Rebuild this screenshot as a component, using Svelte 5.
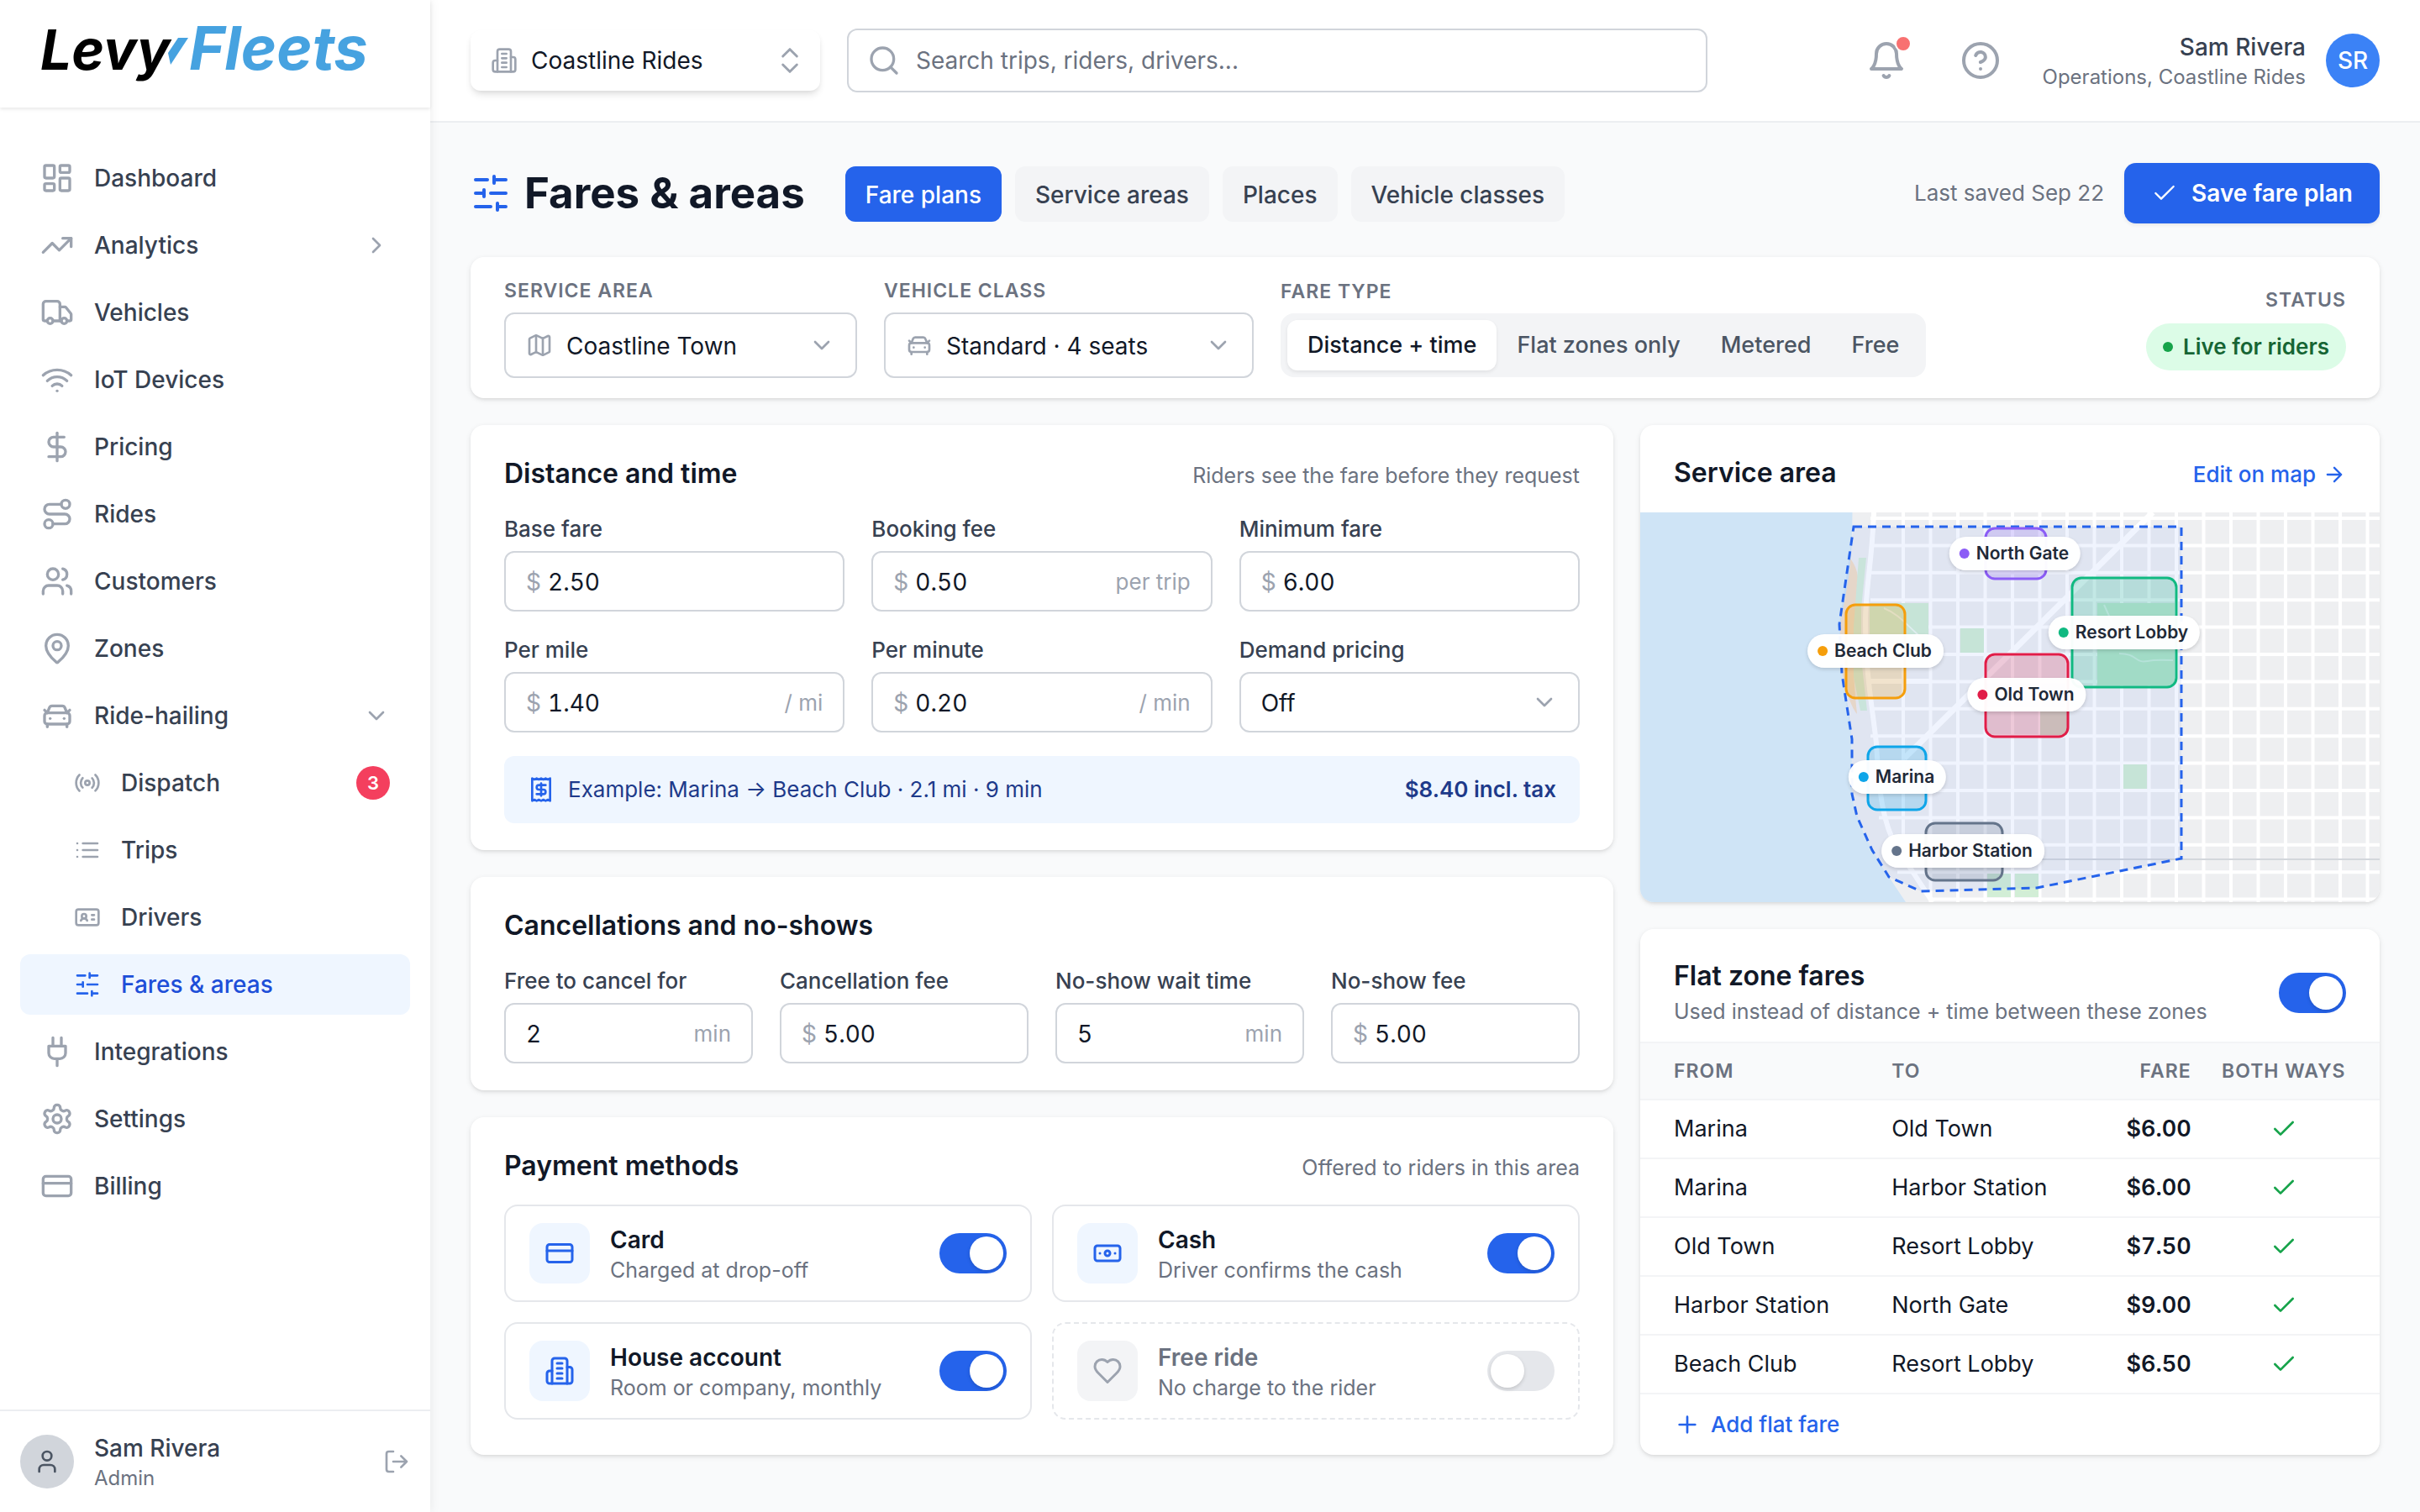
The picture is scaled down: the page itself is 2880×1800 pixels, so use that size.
<script>
  const icons = {
    dashboard:
      '<rect width="7" height="9" x="3" y="3" rx="1"/><rect width="7" height="5" x="14" y="3" rx="1"/><rect width="7" height="9" x="14" y="12" rx="1"/><rect width="7" height="5" x="3" y="16" rx="1"/>',
    trending: '<path d="M22 7 13.5 15.5 8.5 10.5 2 17"/><path d="M16 7h6v6"/>',
    truck:
      '<path d="M14 18V6a2 2 0 0 0-2-2H4a2 2 0 0 0-2 2v11a1 1 0 0 0 1 1h2"/><path d="M15 18H9"/><path d="M19 18h2a1 1 0 0 0 1-1v-3.65a1 1 0 0 0-.22-.624l-3.48-4.35A1 1 0 0 0 17.52 8H14"/><circle cx="17" cy="18" r="2"/><circle cx="7" cy="18" r="2"/>',
    wifi: '<path d="M12 20h.01"/><path d="M2 8.82a15 15 0 0 1 20 0"/><path d="M5 12.859a10 10 0 0 1 14 0"/><path d="M8.5 16.429a5 5 0 0 1 7 0"/>',
    dollar: '<path d="M12 2v20"/><path d="M17 5H9.5a3.5 3.5 0 0 0 0 7h5a3.5 3.5 0 0 1 0 7H6"/>',
    route:
      '<circle cx="6" cy="19" r="3"/><path d="M9 19h8.5a3.5 3.5 0 0 0 0-7h-11a3.5 3.5 0 0 1 0-7H15"/><circle cx="18" cy="5" r="3"/>',
    users:
      '<path d="M16 21v-2a4 4 0 0 0-4-4H6a4 4 0 0 0-4 4v2"/><circle cx="9" cy="7" r="4"/><path d="M22 21v-2a4 4 0 0 0-3-3.87"/><path d="M16 3.13a4 4 0 0 1 0 7.75"/>',
    pin: '<path d="M20 10c0 4.993-5.539 10.193-7.399 11.799a1 1 0 0 1-1.202 0C9.539 20.193 4 14.993 4 10a8 8 0 0 1 16 0"/><circle cx="12" cy="10" r="3"/>',
    car: '<path d="m21 8-2 2-1.5-3.7A2 2 0 0 0 15.646 5H8.4a2 2 0 0 0-1.903 1.257L5 10 3 8"/><path d="M7 14h.01"/><path d="M17 14h.01"/><rect width="18" height="8" x="3" y="10" rx="2"/><path d="M5 18v2"/><path d="M19 18v2"/>',
    radio:
      '<path d="M4.9 19.1C1 15.2 1 8.8 4.9 4.9"/><path d="M7.8 16.2c-2.3-2.3-2.3-6.1 0-8.5"/><circle cx="12" cy="12" r="2"/><path d="M16.2 7.8c2.3 2.3 2.3 6.1 0 8.5"/><path d="M19.1 4.9C23 8.8 23 15.1 19.1 19"/>',
    list: '<path d="M3 12h.01M3 18h.01M3 6h.01M8 12h13M8 18h13M8 6h13"/>',
    idcard:
      '<path d="M16 10h2M16 14h2M6.17 15a3 3 0 0 1 5.66 0"/><circle cx="9" cy="11" r="2"/><rect x="2" y="5" width="20" height="14" rx="2"/>',
    sliders:
      '<path d="M21 4h-7M10 4H3M21 12h-9M8 12H3M21 20h-5M12 20H3M14 2v4M8 10v4M16 18v4"/>',
    plug: '<path d="M12 22v-5M9 8V2M15 8V2M18 8v5a4 4 0 0 1-4 4h-4a4 4 0 0 1-4-4V8Z"/>',
    gear: '<path d="M12.22 2h-.44a2 2 0 0 0-2 2v.18a2 2 0 0 1-1 1.73l-.43.25a2 2 0 0 1-2 0l-.15-.08a2 2 0 0 0-2.73.73l-.22.38a2 2 0 0 0 .73 2.73l.15.1a2 2 0 0 1 1 1.72v.51a2 2 0 0 1-1 1.74l-.15.09a2 2 0 0 0-.73 2.73l.22.38a2 2 0 0 0 2.73.73l.15-.08a2 2 0 0 1 2 0l.43.25a2 2 0 0 1 1 1.73V20a2 2 0 0 0 2 2h.44a2 2 0 0 0 2-2v-.18a2 2 0 0 1 1-1.73l.43-.25a2 2 0 0 1 2 0l.15.08a2 2 0 0 0 2.73-.73l.22-.39a2 2 0 0 0-.73-2.73l-.15-.08a2 2 0 0 1-1-1.74v-.5a2 2 0 0 1 1-1.74l.15-.09a2 2 0 0 0 .73-2.73l-.22-.38a2 2 0 0 0-2.73-.73l-.15.08a2 2 0 0 1-2 0l-.43-.25a2 2 0 0 1-1-1.73V4a2 2 0 0 0-2-2z"/><circle cx="12" cy="12" r="3"/>',
    card: '<rect width="20" height="14" x="2" y="5" rx="2"/><path d="M2 10h20"/>',
    building:
      '<path d="M6 22V4a2 2 0 0 1 2-2h8a2 2 0 0 1 2 2v18Z"/><path d="M6 12H4a2 2 0 0 0-2 2v6a2 2 0 0 0 2 2h2"/><path d="M18 9h2a2 2 0 0 1 2 2v9a2 2 0 0 1-2 2h-2"/><path d="M10 6h4M10 10h4M10 14h4M10 18h4"/>',
    map: '<path d="M14.106 5.553a2 2 0 0 0 1.788 0l3.659-1.83A1 1 0 0 1 21 4.619v12.764a1 1 0 0 1-.553.894l-4.553 2.277a2 2 0 0 1-1.788 0l-4.212-2.106a2 2 0 0 0-1.788 0l-3.659 1.83A1 1 0 0 1 3 19.381V6.618a1 1 0 0 1 .553-.894l4.553-2.277a2 2 0 0 1 1.788 0z"/><path d="M15 5.764v15M9 3.236v15"/>',
    bell: '<path d="M6 8a6 6 0 0 1 12 0c0 7 3 9 3 9H3s3-2 3-9"/><path d="M10.3 21a1.94 1.94 0 0 0 3.4 0"/>',
    help: '<circle cx="12" cy="12" r="10"/><path d="M9.09 9a3 3 0 0 1 5.83 1c0 2-3 3-3 3M12 17h.01"/>',
    search: '<circle cx="11" cy="11" r="8"/><path d="m21 21-4.3-4.3"/>',
    updown: '<path d="m7 15 5 5 5-5M7 9l5-5 5 5"/>',
    right: '<path d="m9 18 6-6-6-6"/>',
    down: '<path d="m6 9 6 6 6-6"/>',
    check: '<path d="M20 6 9 17l-5-5"/>',
    receipt:
      '<path d="M4 2v20l2-1 2 1 2-1 2 1 2-1 2 1 2-1 2 1V2l-2 1-2-1-2 1-2-1-2 1-2-1-2 1Z"/><path d="M16 8h-6a2 2 0 1 0 0 4h4a2 2 0 1 1 0 4H8"/><path d="M12 17.5v-11"/>',
    cash: '<rect width="20" height="12" x="2" y="6" rx="2"/><circle cx="12" cy="12" r="2"/><path d="M6 12h.01M18 12h.01"/>',
    heart:
      '<path d="M19 14c1.49-1.46 3-3.21 3-5.5A5.5 5.5 0 0 0 16.5 3c-1.76 0-3 .5-4.5 2-1.5-1.5-2.74-2-4.5-2A5.5 5.5 0 0 0 2 8.5c0 2.3 1.5 4.05 3 5.5l7 7Z"/>',
    user: '<path d="M19 21v-2a4 4 0 0 0-4-4H9a4 4 0 0 0-4 4v2"/><circle cx="12" cy="7" r="4"/>',
    logout: '<path d="M9 21H5a2 2 0 0 1-2-2V5a2 2 0 0 1 2-2h4M16 17l5-5-5-5M21 12H9"/>',
    arrow: '<path d="M5 12h14M12 5l7 7-7 7"/>',
    plus: '<path d="M5 12h14M12 5v14"/>'
  };

  const nav = [
    { label: 'Dashboard', icon: 'dashboard' },
    { label: 'Analytics', icon: 'trending', chevron: 'right' },
    { label: 'Vehicles', icon: 'truck' },
    { label: 'IoT Devices', icon: 'wifi' },
    { label: 'Pricing', icon: 'dollar' },
    { label: 'Rides', icon: 'route' },
    { label: 'Customers', icon: 'users' },
    { label: 'Zones', icon: 'pin' },
    { label: 'Ride-hailing', icon: 'car', chevron: 'down' },
    { label: 'Dispatch', icon: 'radio', sub: true, badge: 3 },
    { label: 'Trips', icon: 'list', sub: true },
    { label: 'Drivers', icon: 'idcard', sub: true },
    { label: 'Fares & areas', icon: 'sliders', sub: true, active: true },
    { label: 'Integrations', icon: 'plug' },
    { label: 'Settings', icon: 'gear' },
    { label: 'Billing', icon: 'card' }
  ];

  const tabs = ['Fare plans', 'Service areas', 'Places', 'Vehicle classes'];
  let tab = $state('Fare plans');

  const fareTypes = ['Distance + time', 'Flat zones only', 'Metered', 'Free'];
  let fareType = $state('Distance + time');

  const rates = [
    { id: 'base', label: 'Base fare', value: '2.50', money: true },
    { id: 'booking', label: 'Booking fee', value: '0.50', money: true, unit: 'per trip' },
    { id: 'minimum', label: 'Minimum fare', value: '6.00', money: true },
    { id: 'mile', label: 'Per mile', value: '1.40', money: true, unit: '/ mi' },
    { id: 'minute', label: 'Per minute', value: '0.20', money: true, unit: '/ min' }
  ];

  const cancels = [
    { id: 'free-cancel', label: 'Free to cancel for', value: '2', unit: 'min' },
    { id: 'cancel-fee', label: 'Cancellation fee', value: '5.00', money: true },
    { id: 'wait', label: 'No-show wait time', value: '5', unit: 'min' },
    { id: 'noshow-fee', label: 'No-show fee', value: '5.00', money: true }
  ];

  let methods = $state([
    { id: 'card', name: 'Card', note: 'Charged at drop-off', icon: 'card', on: true },
    { id: 'cash', name: 'Cash', note: 'Driver confirms the cash', icon: 'cash', on: true },
    { id: 'house', name: 'House account', note: 'Room or company, monthly', icon: 'building', on: true },
    { id: 'free', name: 'Free ride', note: 'No charge to the rider', icon: 'heart', on: false }
  ]);

  const fares = [
    ['Marina', 'Old Town', '$6.00'],
    ['Marina', 'Harbor Station', '$6.00'],
    ['Old Town', 'Resort Lobby', '$7.50'],
    ['Harbor Station', 'North Gate', '$9.00'],
    ['Beach Club', 'Resort Lobby', '$6.50']
  ];

  // Map drawing space
  const W = 880;
  const H = 464;
  const streetsX = Array.from({ length: 18 }, (_, i) => 313 + i * 32.5);
  const streetsY = Array.from({ length: 15 }, (_, i) => 7 + i * 32.4);
  const parks = [
    [381, 138, 28, 29],
    [575, 300, 28, 29],
    [476, 236, 32, 29],
    [413, 430, 28, 28],
    [446, 430, 28, 28],
    [544, 108, 92, 98],
    [273, 108, 70, 58]
  ];
  const zones = [
    { name: 'North Gate', color: '#8b5cf6', x: 411, y: 19, w: 72, h: 60, lx: 446, ly: 49 },
    { name: 'Resort Lobby', color: '#10b981', x: 514, y: 78, w: 124, h: 130, lx: 576, ly: 143 },
    { name: 'Old Town', color: '#e11d48', x: 411, y: 169, w: 98, h: 98, lx: 460, ly: 217 },
    { name: 'Beach Club', color: '#f59e0b', x: 245, y: 110, w: 70, h: 111, lx: 280, ly: 165 },
    { name: 'Marina', color: '#0ea5e9', x: 271, y: 279, w: 69, h: 75, lx: 306, ly: 315 },
    { name: 'Harbor Station', color: '#64748b', x: 340, y: 370, w: 91, h: 68, lx: 384, ly: 403 }
  ];
</script>

{#snippet icon(name, size)}
  <svg class="ic {size}" viewBox="0 0 24 24" aria-hidden="true">{@html icons[name]}</svg>
{/snippet}

{#snippet field(f)}
  <div class="field">
    <label for={f.id}>{f.label}</label>
    <div class="box">
      {#if f.money}<span class="cur">$</span>{/if}
      <input id={f.id} type="text" value={f.value} />
      {#if f.unit}<span class="unit">{f.unit}</span>{/if}
    </div>
  </div>
{/snippet}

<div class="app">
  <aside>
    <div class="brand">
      <svg class="logo" viewBox="0 0 440 112" role="img" aria-label="Levy Fleets">
        <text class="levy" x="0" y="75">Levy</text>
        <path d="M152 55 164 37h12l-21 32z" fill="#46a2e0" />
        <text class="fleets" x="177" y="75">Fleets</text>
      </svg>
    </div>
    <nav class="menu">
      {#each nav as n}
        <a href="#top" class:sub={n.sub} class:active={n.active}>
          {@render icon(n.icon, n.sub ? 's32' : 's40')}
          <span class="grow">{n.label}</span>
          {#if n.chevron}{@render icon(n.chevron, 's32')}{/if}
          {#if n.badge}<span class="badge">{n.badge}</span>{/if}
        </a>
      {/each}
    </nav>
    <div class="me">
      <span class="face">{@render icon('user', 's32')}</span>
      <div class="who">
        <strong>Sam Rivera</strong>
        <span>Admin</span>
      </div>
      <button class="bare" aria-label="Log out">{@render icon('logout', 's32')}</button>
    </div>
  </aside>

  <div class="main">
    <header>
      <button class="org">
        {@render icon('building', 's32')}
        <span class="grow">Coastline Rides</span>
        {@render icon('updown', 's40 thin')}
      </button>
      <label class="search">
        {@render icon('search', 's40')}
        <input type="text" placeholder="Search trips, riders, drivers..." aria-label="Search" />
      </label>
      <div class="tools">
        <button class="bare bell" aria-label="Notifications">
          {@render icon('bell', 's48')}
          <span class="dot"></span>
        </button>
        <button class="bare" aria-label="Help">{@render icon('help', 's48')}</button>
        <div class="account">
          <div class="who">
            <strong>Sam Rivera</strong>
            <span>Operations, Coastline Rides</span>
          </div>
          <span class="avatar">SR</span>
        </div>
      </div>
    </header>

    <main>
      <div class="titlebar">
        <h1>{@render icon('sliders', 's48')}Fares &amp; areas</h1>
        <div class="tabs">
          {#each tabs as t}
            <button class:on={tab === t} onclick={() => (tab = t)}>{t}</button>
          {/each}
        </div>
        <span class="saved">Last saved Sep 22</span>
        <button class="save">{@render icon('check', 's32 thin')}Save fare plan</button>
      </div>

      <section class="card filters">
        <div class="group area">
          <label class="caps" for="area">Service area</label>
          <div class="pick">
            {@render icon('map', 's32')}
            <select id="area"><option>Coastline Town</option></select>
            {@render icon('down', 's32')}
          </div>
        </div>
        <div class="group klass">
          <label class="caps" for="klass">Vehicle class</label>
          <div class="pick">
            {@render icon('car', 's32')}
            <select id="klass"><option>Standard · 4 seats</option></select>
            {@render icon('down', 's32')}
          </div>
        </div>
        <div class="group">
          <span class="caps" id="ft">Fare type</span>
          <div class="seg" role="group" aria-labelledby="ft">
            {#each fareTypes as t}
              <button class:on={fareType === t} aria-pressed={fareType === t} onclick={() => (fareType = t)}>{t}</button>
            {/each}
          </div>
        </div>
        <div class="group status">
          <span class="caps">Status</span>
          <span class="live">Live for riders</span>
        </div>
      </section>

      <div class="cols">
        <div class="col">
          <section class="card pad">
            <div class="head">
              <h2>Distance and time</h2>
              <span>Riders see the fare before they request</span>
            </div>
            <div class="three">
              {#each rates as f}{@render field(f)}{/each}
              <div class="field">
                <label for="demand">Demand pricing</label>
                <div class="box">
                  <select id="demand"><option>Off</option></select>
                  {@render icon('down', 's32')}
                </div>
              </div>
            </div>
            <div class="example">
              {@render icon('receipt', 's32')}
              <span class="grow">Example: Marina → Beach Club · 2.1 mi · 9 min</span>
              <strong>$8.40 incl. tax</strong>
            </div>
          </section>

          <section class="card pad">
            <div class="head"><h2>Cancellations and no-shows</h2></div>
            <div class="four">
              {#each cancels as f}{@render field(f)}{/each}
            </div>
          </section>

          <section class="card pad fill">
            <div class="head">
              <h2>Payment methods</h2>
              <span>Offered to riders in this area</span>
            </div>
            <div class="two">
              {#each methods as m}
                <label class="method" class:off={!m.on}>
                  <span class="tile">{@render icon(m.icon, 's36')}</span>
                  <span class="grow">
                    <b>{m.name}</b>
                    <small>{m.note}</small>
                  </span>
                  <input class="toggle" type="checkbox" role="switch" bind:checked={m.on} />
                </label>
              {/each}
            </div>
          </section>
        </div>

        <div class="col">
          <section class="card clip">
            <div class="head maphead">
              <h2>Service area</h2>
              <a href="#map">Edit on map {@render icon('arrow', 's28')}</a>
            </div>
            <div class="map">
              <svg viewBox="0 0 {W} {H}" aria-hidden="true">
                <rect width={W} height={H} fill="#eeeff1" />
                <path d="M0 0H252.500C252 60 248 90 241 118C237 140 238 180 242 205C248 235 252 250 252 300V334C256 370 280 410 296 434L316 464H0Z" fill="#cfe4f6" />
                <path d="M250 55C262 70 262 90 256 130C252 170 254 200 258 240C250 230 242 205 239 180C237 150 238 130 241 118C246 90 250 70 250 55Z" fill="#f4dfc6" />
                <path d="M260 54h9l-6 60v60l7 62h-8l-8-40v-60z" fill="#d6eeda" />
                <g fill="none" stroke="#fff" stroke-width="4">
                  {#each streetsX as x, i}
                    <path d="M{x} 0V{i === 0 ? 385 : H}" />
                  {/each}
                  {#each streetsY as y, i}
                    <path d="M{i < 9 ? 274 : i < 12 ? 284 : i < 14 ? 306 : 346} {y}H{W}" />
                  {/each}
                  <path d="M278 0C276 60 268 90 268 130C268 190 276 230 281 275C284 330 288 370 306 400L348 464" stroke-width="6" />
                  <path d="M610 0 314 293" stroke-width="7" />
                  <path d="M272 201H344" stroke-width="6" />
                </g>
                {#each parks as [x, y, w, h]}
                  <rect {x} {y} width={w} height={h} fill="#d2eed6" />
                {/each}
                <path d="M290 114C310 122 318 136 336 150M552 110l10 22M570 168c22 0 18 12 34 9 10-2 14-1 30-1" fill="none" stroke="#fff" stroke-opacity=".6" stroke-width="2" />
                <path d="M326 413H{W}" stroke="#d3d7dc" stroke-width="2" />
                <path
                  d="M254 17H644V412L472 447 334 451 296 434 276 402 258 362 252 335V270L240 192 237 133Z"
                  fill="#2563eb" fill-opacity=".07" stroke="#2563eb" stroke-width="3" stroke-dasharray="10 7"
                />
                {#each zones as z}
                  <rect x={z.x} y={z.y} width={z.w} height={z.h} rx="11" fill={z.color} fill-opacity=".2" stroke={z.color} stroke-width="3" />
                {/each}
              </svg>
              {#each zones as z}
                <span class="zone" style="left:{(z.lx / W) * 100}%;top:{(z.ly / H) * 100}%;--c:{z.color}">{z.name}</span>
              {/each}
            </div>
          </section>

          <section class="card clip">
            <div class="flathead">
              <div class="grow">
                <h2>Flat zone fares</h2>
                <p>Used instead of distance + time between these zones</p>
              </div>
              <input class="toggle" type="checkbox" role="switch" checked aria-label="Flat zone fares" />
            </div>
            <table>
              <thead>
                <tr><th>From</th><th>To</th><th>Fare</th><th>Both ways</th></tr>
              </thead>
              <tbody>
                {#each fares as [from, to, fare]}
                  <tr>
                    <td>{from}</td>
                    <td>{to}</td>
                    <td>{fare}</td>
                    <td>{@render icon('check', 's32')}</td>
                  </tr>
                {/each}
              </tbody>
            </table>
            <button class="add">{@render icon('plus', 's32')}Add flat fare</button>
          </section>
        </div>
      </div>
    </main>
  </div>
</div>

<style>
  :global(body) {
    background: #f9fafb;
  }
  .app,
  .app * {
    box-sizing: border-box;
  }
  .app {
    display: grid;
    grid-template-columns: 512px minmax(0, 1fr);
    min-height: 100vh;
    font-family: Inter, 'Liberation Sans', sans-serif;
    font-optical-sizing: none;
    font-size: 28px;
    line-height: 40px;
    color: #111827;
  }
  button,
  input,
  select {
    font: inherit;
    font-optical-sizing: none;
    color: inherit;
    margin: 0;
    padding: 0;
    border: 0;
    background: none;
    outline: 0;
  }
  button {
    cursor: pointer;
  }
  select {
    appearance: none;
  }
  a {
    text-decoration: none;
  }
  h1,
  h2,
  p {
    margin: 0;
  }
  .grow {
    flex: 1;
    min-width: 0;
  }
  .ic {
    display: block;
    flex: none;
    fill: none;
    stroke: currentColor;
    stroke-width: 2;
    stroke-linecap: round;
    stroke-linejoin: round;
    width: 32px;
    height: 32px;
  }
  .s28 {
    width: 28px;
    height: 28px;
  }
  .s36 {
    width: 36px;
    height: 36px;
  }
  .s40 {
    width: 40px;
    height: 40px;
  }
  .s48 {
    width: 48px;
    height: 48px;
  }
  .thin {
    stroke-width: 1.75;
  }

  /* Sidebar */
  aside {
    display: flex;
    flex-direction: column;
    background: #fff;
    box-shadow: 0 0 12px rgba(0, 0, 0, 0.08);
    z-index: 1;
  }
  .brand {
    height: 128px;
    padding: 8px 24px 8px 48px;
    box-shadow: 0 2px 4px rgba(0, 0, 0, 0.09);
  }
  .logo {
    display: block;
    width: 440px;
    height: 112px;
    overflow: visible;
  }
  .logo text {
    font-family: Inter, sans-serif;
    font-style: italic;
    font-weight: 700;
  }
  .levy {
    font-size: 66px;
    fill: #000;
  }
  .fleets {
    font-size: 72px;
    fill: #46a2e0;
  }
  .menu {
    flex: 1;
    display: flex;
    flex-direction: column;
    gap: 8px;
    padding: 48px 24px;
  }
  .menu a {
    display: flex;
    align-items: center;
    gap: 24px;
    height: 72px;
    padding: 0 24px;
    border-radius: 12px;
    font-weight: 500;
    color: #374151;
  }
  .menu .ic,
  .bare,
  .org .ic,
  .search .ic,
  .pick .ic,
  .box .ic {
    color: #9ca3af;
  }
  .menu a.sub {
    padding-left: 64px;
  }
  .menu a.active {
    background: #eff6ff;
    color: #1d4ed8;
  }
  .menu a.active .ic {
    color: #2563eb;
  }
  .badge {
    width: 40px;
    height: 40px;
    border-radius: 50%;
    background: #f43f5e;
    color: #fff;
    font-size: 22px;
    font-weight: 600;
    text-align: center;
  }
  .me {
    display: flex;
    align-items: center;
    gap: 24px;
    height: 122px;
    padding: 0 24px;
    border-top: 2px solid #eceef1;
  }
  .face,
  .avatar {
    display: grid;
    place-items: center;
    width: 64px;
    height: 64px;
    border-radius: 50%;
    background: #d1d5db;
    color: #4b5563;
  }
  .who {
    flex: 1;
    display: flex;
    flex-direction: column;
    padding-top: 2px;
  }
  .who strong {
    font-weight: 500;
    line-height: 38px;
    color: #374151;
  }
  .who span {
    font-size: 24px;
    line-height: 34px;
    color: #6b7280;
  }

  /* Top bar */
  header {
    display: flex;
    align-items: center;
    gap: 32px;
    height: 146px;
    padding: 0 48px;
    background: #fff;
    border-bottom: 2px solid #eceef1;
  }
  .org {
    display: flex;
    align-items: center;
    gap: 16px;
    width: 416px;
    height: 72px;
    padding: 0 16px 0 24px;
    border-radius: 12px;
    background: #fff;
    text-align: left;
    box-shadow: 0 6px 10px -2px rgba(0, 0, 0, 0.12), 0 2px 6px -2px rgba(0, 0, 0, 0.08);
  }
  .search {
    display: flex;
    align-items: center;
    gap: 18px;
    width: 1024px;
    height: 76px;
    padding: 0 22px;
    border: 2px solid #d1d5db;
    border-radius: 12px;
  }
  .search input {
    flex: 1;
    min-width: 0;
  }
  .search input::placeholder {
    color: #6b7280;
    opacity: 1;
  }
  .tools {
    flex: 1;
    display: flex;
    align-items: center;
    justify-content: flex-end;
    gap: 64px;
  }
  .bell {
    position: relative;
  }
  .bell .dot {
    position: absolute;
    top: -6px;
    right: -6px;
    width: 20px;
    height: 20px;
    border: 2px solid #fff;
    border-radius: 50%;
    background: #f87171;
  }
  .account {
    display: flex;
    align-items: center;
    gap: 24px;
    margin-left: -14px;
    text-align: right;
  }
  .avatar {
    background: #3b82f6;
    color: #fff;
    font-weight: 500;
  }

  /* Page */
  main {
    display: flex;
    flex-direction: column;
    padding: 48px 48px 68px;
  }
  .titlebar {
    display: flex;
    align-items: center;
    height: 72px;
    margin-bottom: 40px;
  }
  h1 {
    display: flex;
    align-items: center;
    gap: 16px;
    margin-right: 48px;
    font-size: 51px;
    line-height: 64px;
    font-weight: 700;
  }
  h1 .ic {
    color: #2563eb;
  }
  .tabs {
    flex: 1;
    display: flex;
    gap: 16px;
    padding-top: 2px;
  }
  .tabs button {
    padding: 14px 24px 12px;
    border-radius: 12px;
    background: #f3f4f6;
    color: #374151;
    font-weight: 500;
  }
  .tabs button.on {
    background: #2563eb;
    color: #fff;
  }
  .saved {
    margin-right: 24px;
    font-size: 26px;
    color: #6b7280;
  }
  .save {
    display: flex;
    align-items: center;
    gap: 16px;
    height: 72px;
    padding: 0 32px;
    border-radius: 14px;
    background: #2563eb;
    color: #fff;
    font-weight: 600;
    box-shadow: 0 2px 4px rgba(0, 0, 0, 0.08);
  }
  .card {
    background: #fff;
    border-radius: 16px;
    box-shadow: 0 2px 6px rgba(0, 0, 0, 0.1), 0 2px 4px -2px rgba(0, 0, 0, 0.1);
  }
  .filters {
    display: flex;
    align-items: center;
    gap: 32px;
    padding: 24px 40px;
    margin-bottom: 32px;
  }
  .group {
    display: flex;
    flex-direction: column;
    gap: 10px;
  }
  .area {
    width: 420px;
  }
  .klass {
    width: 440px;
  }
  .caps,
  th {
    font-size: 23px;
    line-height: 32px;
    font-weight: 600;
    letter-spacing: 1px;
    text-transform: uppercase;
    color: #6b7280;
  }
  .pick {
    display: flex;
    align-items: center;
    gap: 16px;
    height: 78px;
    padding: 0 24px;
    border: 2px solid #d1d5db;
    border-radius: 12px;
  }
  .pick select,
  .box select {
    flex: 1;
    min-width: 0;
    height: 42px;
    padding-top: 2px;
  }
  .seg {
    display: flex;
    height: 76px;
    padding: 8px;
    border-radius: 16px;
    background: #f3f4f6;
  }
  .seg button {
    padding: 0 24px;
    border-radius: 12px;
    color: #4b5563;
    font-size: 27px;
    font-weight: 500;
  }
  .seg button.on {
    background: #fff;
    color: #111827;
    box-shadow: 0 2px 4px rgba(0, 0, 0, 0.08);
  }
  .status {
    margin-left: auto;
    align-items: flex-end;
    gap: 12px;
    padding-top: 2px;
  }
  .live {
    display: flex;
    align-items: center;
    gap: 12px;
    height: 56px;
    padding: 0 20px;
    border-radius: 28px;
    background: #dcfce7;
    color: #166534;
    font-size: 26px;
    font-weight: 600;
  }
  .live::before {
    content: '';
    width: 12px;
    height: 12px;
    border-radius: 50%;
    background: #16a34a;
  }
  .cols {
    display: grid;
    grid-template-columns: minmax(0, 17fr) minmax(0, 11fr);
    gap: 32px;
  }
  .col {
    display: flex;
    flex-direction: column;
    gap: 32px;
  }
  .pad {
    padding: 34px 40px 32px;
  }
  .fill {
    flex: 1;
  }
  .clip {
    overflow: hidden;
  }
  .head {
    display: flex;
    align-items: baseline;
    justify-content: space-between;
    height: 48px;
    margin-bottom: 22px;
  }
  h2 {
    font-size: 32px;
    line-height: 48px;
    font-weight: 600;
  }
  .head span {
    font-size: 25px;
    color: #6b7280;
  }
  .three,
  .four,
  .two {
    display: grid;
    gap: 26px 32px;
  }
  .three {
    grid-template-columns: repeat(3, minmax(0, 1fr));
  }
  .four {
    grid-template-columns: repeat(4, minmax(0, 1fr));
  }
  .two {
    grid-template-columns: repeat(2, minmax(0, 1fr));
    gap: 24px;
  }
  .field {
    display: flex;
    flex-direction: column;
    gap: 8px;
  }
  .field label {
    padding-top: 2px;
    font-size: 26px;
    line-height: 36px;
    font-weight: 500;
    color: #374151;
  }
  .box {
    display: flex;
    align-items: center;
    gap: 8px;
    height: 72px;
    padding: 0 24px;
    border: 2px solid #d1d5db;
    border-radius: 12px;
  }
  .box input {
    flex: 1;
    min-width: 0;
    padding-top: 2px;
    font-variant-numeric: tabular-nums;
  }
  .cur,
  .unit {
    padding-top: 2px;
    color: #9ca3af;
  }
  .unit {
    font-size: 26px;
  }
  .example {
    display: flex;
    align-items: center;
    gap: 16px;
    height: 80px;
    margin-top: 28px;
    padding: 0 28px;
    border-radius: 12px;
    background: #eff6ff;
    color: #1e3a8a;
    font-size: 26px;
  }
  .example .ic {
    color: #2563eb;
  }
  .example strong {
    font-weight: 600;
  }
  .method {
    display: flex;
    align-items: center;
    gap: 24px;
    height: 116px;
    padding: 0 28px;
    border: 2px solid #e5e7eb;
    border-radius: 16px;
  }
  .tile {
    display: grid;
    place-items: center;
    width: 72px;
    height: 72px;
    border-radius: 16px;
    background: #eff6ff;
    color: #2563eb;
  }
  .method b,
  .method small {
    display: block;
  }
  .method b {
    font-weight: 600;
  }
  .method small {
    font-size: 25px;
    line-height: 32px;
    color: #6b7280;
  }
  .method.off {
    border-style: dashed;
  }
  .method.off b {
    color: #6b7280;
  }
  .method.off .tile {
    background: #f3f4f6;
    color: #9ca3af;
  }
  .toggle {
    appearance: none;
    flex: none;
    width: 80px;
    height: 48px;
    padding: 4px;
    border-radius: 24px;
    background: #e5e7eb;
  }
  .toggle::before {
    content: '';
    display: block;
    width: 40px;
    height: 40px;
    border-radius: 50%;
    background: #fff;
    box-shadow: 0 2px 4px rgba(0, 0, 0, 0.15);
  }
  .toggle:checked {
    background: #2563eb;
  }
  .toggle:checked::before {
    margin-left: auto;
  }
  .maphead {
    height: 104px;
    margin: 0;
    padding: 33px 40px 23px;
  }
  .maphead a,
  .add {
    display: flex;
    align-items: center;
    gap: 8px;
    font-size: 26px;
    font-weight: 500;
    color: #2563eb;
  }
  .map {
    position: relative;
  }
  .map > svg {
    display: block;
    width: 100%;
  }
  .zone {
    position: absolute;
    display: flex;
    align-items: center;
    gap: 8px;
    height: 40px;
    padding: 0 14px 0 12px;
    border-radius: 20px;
    transform: translate(-50%, -50%);
    background: rgba(255, 255, 255, 0.97);
    box-shadow: 0 2px 4px rgba(0, 0, 0, 0.15);
    font-size: 21px;
    font-weight: 600;
    color: #1f2937;
    white-space: nowrap;
  }
  .zone::before {
    content: '';
    width: 12px;
    height: 12px;
    border-radius: 50%;
    background: var(--c);
  }
  .flathead {
    display: flex;
    align-items: center;
    padding: 34px 40px 16px;
  }
  .flathead h2 {
    line-height: 44px;
  }
  .flathead p {
    font-size: 25px;
    color: #6b7280;
  }
  table {
    width: 100%;
    table-layout: fixed;
    border-collapse: separate;
    border-spacing: 0;
  }
  th,
  td {
    height: 70px;
    padding: 0;
    border-bottom: 2px solid #f3f4f6;
    text-align: left;
    white-space: nowrap;
  }
  td {
    font-size: 27px;
  }
  th {
    background: #f9fafb;
    border-top: 2px solid #f3f4f6;
  }
  th:nth-child(1) {
    width: 34%;
  }
  th:nth-child(3) {
    width: 16%;
  }
  th:nth-child(4) {
    width: 25.5%;
  }
  th:first-child,
  td:first-child {
    padding-left: 40px;
  }
  th:nth-child(3),
  td:nth-child(3) {
    text-align: right;
  }
  td:nth-child(3) {
    font-weight: 600;
    font-variant-numeric: tabular-nums;
  }
  th:nth-child(4),
  td:nth-child(4) {
    padding: 0 40px 0 36px;
    text-align: center;
  }
  td .ic {
    margin: 0 auto;
    color: #16a34a;
  }
  .add {
    gap: 12px;
    height: 72px;
    padding: 0 40px;
  }
</style>
